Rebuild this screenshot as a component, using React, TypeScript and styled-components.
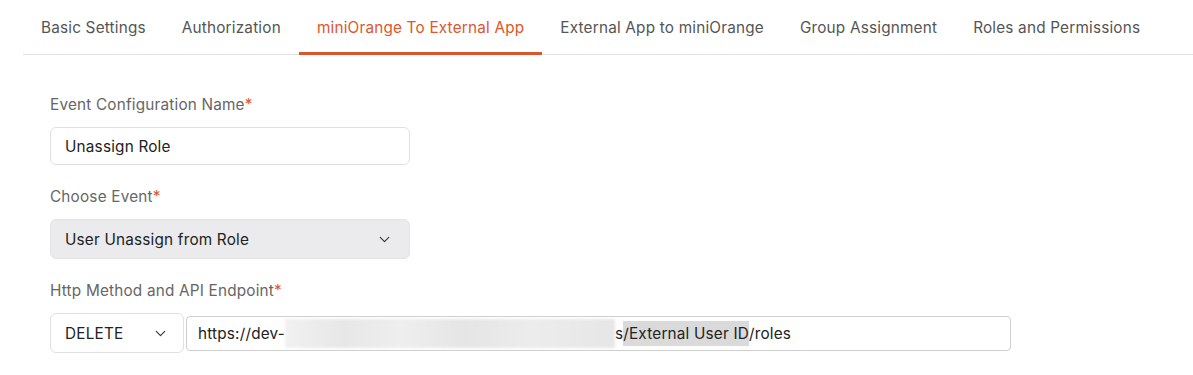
import styled, { createGlobalStyle } from "styled-components";
import { ChevronDown } from "lucide-react";

const GlobalStyle = createGlobalStyle`
  body {
    margin: 0;
    background: #ffffff;
    font-family: Inter, "Noto Sans", sans-serif;
    letter-spacing: 0.2px;
  }
`;

const tabs = [
  "Basic Settings",
  "Authorization",
  "miniOrange To External App",
  "External App to miniOrange",
  "Group Assignment",
  "Roles and Permissions",
];

function App() {
  return (
    <>
      <GlobalStyle />
      <Page>
        <TabBar>
          {tabs.map((t, i) => (
            <Tab key={t} $active={i === 2}>
              {t}
            </Tab>
          ))}
        </TabBar>

        <Form>
          <Field>
            <Label>
              Event Configuration Name<Req>*</Req>
            </Label>
            <TextBox>Unassign Role</TextBox>
          </Field>

          <Field>
            <Label>
              Choose Event<Req>*</Req>
            </Label>
            <SelectBox $filled>
              User Unassign from Role
              <ChevronDown size={17} strokeWidth={1.6} color="#333" />
            </SelectBox>
          </Field>

          <Field>
            <Label>
              Http Method and API Endpoint<Req>*</Req>
            </Label>
            <EndpointRow>
              <MethodBox>
                DELETE
                <ChevronDown size={17} strokeWidth={1.6} color="#333" />
              </MethodBox>
              <UrlBox>
                https://dev-
                <Redacted />
                s<Marked>/External User ID</Marked>/roles
              </UrlBox>
            </EndpointRow>
          </Field>
        </Form>
      </Page>
    </>
  );
}

export default App;

const Page = styled.div`
  width: 1193px;
  height: 375px;
  overflow: hidden;
`;

const TabBar = styled.div`
  display: flex;
  margin-left: 23px;
  height: 54px;
  border-bottom: 1px solid #e2e2e2;
`;

const Tab = styled.div<{ $active?: boolean }>`
  display: flex;
  align-items: center;
  padding: 0 18px;
  font-size: 15.3px;
  color: ${(p) => (p.$active ? "#e0552b" : "#555555")};
  box-shadow: ${(p) => (p.$active ? "inset 0 -3px 0 #d9552b" : "none")};
  margin-bottom: -1px;
`;

const Form = styled.div`
  display: flex;
  flex-direction: column;
  gap: 22px;
  padding: 40px 0 0 50px;
`;

const Field = styled.div`
  display: flex;
  flex-direction: column;
  gap: 12px;
`;

const Label = styled.div`
  font-size: 15.3px;
  line-height: 20px;
  color: #666666;
`;

const Req = styled.span`
  color: #e0552b;
`;

const TextBox = styled.div`
  box-sizing: border-box;
  width: 360px;
  height: 38px;
  display: flex;
  align-items: center;
  padding: 0 14px;
  border: 1px solid #e0e0e0;
  border-radius: 6px;
  font-size: 15.3px;
  color: #222222;
`;

const SelectBox = styled(TextBox)<{ $filled?: boolean }>`
  justify-content: space-between;
  height: 40px;
  padding: 0 16px 0 14px;
  background: ${(p) => (p.$filled ? "#ebebed" : "#ffffff")};
  border-color: ${(p) => (p.$filled ? "#e4e4e6" : "#e0e0e0")};
`;

const EndpointRow = styled.div`
  display: flex;
  align-items: center;
  gap: 2px;
`;

const MethodBox = styled(SelectBox)`
  width: 134px;
  padding: 0 14px 0 14px;
`;

const UrlBox = styled.div`
  box-sizing: border-box;
  width: 825px;
  height: 35px;
  display: flex;
  align-items: center;
  padding: 0 11px;
  border: 1px solid #cfcfcf;
  border-radius: 4px;
  font-size: 15.3px;
  color: #222222;
  white-space: pre;
`;

const Redacted = styled.span`
  display: inline-block;
  width: 330px;
  height: 29px;
  background: linear-gradient(
    90deg,
    #f1f1f1 0%,
    #e7e7e7 18%,
    #eeeeee 35%,
    #e5e5e5 55%,
    #ececec 75%,
    #e6e6e6 100%
  );
  filter: blur(1.5px);
`;

const Marked = styled.span`
  background: #dadada;
  padding: 3px 0;
`;
